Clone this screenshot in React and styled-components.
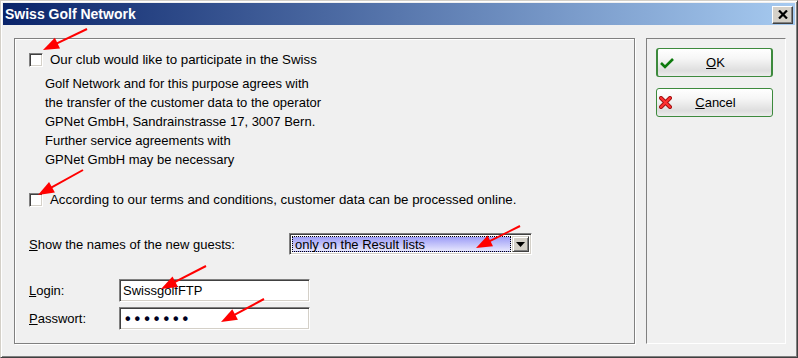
import styled, { createGlobalStyle } from "styled-components";

const GlobalStyle = createGlobalStyle`
  html, body { margin: 0; padding: 0; background: #f0f0f0; }
  body { font-family: "Liberation Sans", Arial, sans-serif; font-size: 13px; color: #000; }
`;

const arrows = [
  { from: [86, 28], to: [42, 49] },
  { from: [82, 169], to: [37, 194] },
  { from: [519, 225], to: [475, 247] },
  { from: [205, 265], to: [160, 288] },
  { from: [263, 298], to: [220, 321] },
];

const headPoints = ([x1, y1], [x2, y2]) => {
  const dx = x2 - x1;
  const dy = y2 - y1;
  const len = Math.hypot(dx, dy);
  const ux = dx / len;
  const uy = dy / len;
  const bx = x2 - ux * 16;
  const by = y2 - uy * 16;
  const w = 6;
  return `${x2},${y2} ${bx - uy * w},${by + ux * w} ${bx + uy * w},${by - ux * w}`;
};

const Arrows = () => (
  <Overlay width="798" height="358" viewBox="0 0 798 358">
    {arrows.map((a, i) => {
      const dx = a.to[0] - a.from[0];
      const dy = a.to[1] - a.from[1];
      const len = Math.hypot(dx, dy);
      const ex = a.to[0] - (dx / len) * 12;
      const ey = a.to[1] - (dy / len) * 12;
      return (
        <g key={i}>
          <line x1={a.from[0]} y1={a.from[1]} x2={ex} y2={ey} stroke="#ff0000" strokeWidth="2" />
          <polygon points={headPoints(a.from, a.to)} fill="#ff0000" />
        </g>
      );
    })}
  </Overlay>
);

const CheckIcon = () => (
  <svg width="14" height="12" viewBox="0 0 14 12">
    <path d="M1 6 L5 10 L13 2" fill="none" stroke="#0e7a0e" strokeWidth="2.6" />
  </svg>
);

const CrossIcon = () => (
  <svg width="13" height="13" viewBox="0 0 13 13">
    <path d="M2 2 L11 11 M11 2 L2 11" stroke="#a01010" strokeWidth="4" strokeLinecap="round" />
    <path d="M2 2 L11 11 M11 2 L2 11" stroke="#ff3030" strokeWidth="2.2" strokeLinecap="round" />
  </svg>
);

const App = () => {
  return (
    <>
      <GlobalStyle />
      <Window>
        <TitleBar>
          <Title>Swiss Golf Network</Title>
          <CloseButton>
            <svg width="10" height="9" viewBox="0 0 10 9">
              <path d="M1 0.5 L9 8.5 M9 0.5 L1 8.5" stroke="#000" strokeWidth="2.2" />
            </svg>
          </CloseButton>
        </TitleBar>
        <Body>
          <LeftGroup>
            <CheckRow>
              <CheckBox />
              <CheckLabel>Our club would like to participate in the Swiss</CheckLabel>
            </CheckRow>
            <Paragraph>
              <Line>Golf Network and for this purpose agrees with</Line>
              <Line>the transfer of the customer data to the operator</Line>
              <Line>GPNet GmbH, Sandrainstrasse 17, 3007 Bern.</Line>
              <Line>Further service agreements with</Line>
              <Line>GPNet GmbH may be necessary</Line>
            </Paragraph>
            <CheckRow $top={21}>
              <CheckBox />
              <CheckLabel>According to our terms and conditions, customer data can be processed online.</CheckLabel>
            </CheckRow>
            <FieldRow $top={24} $label={260} $height={22}>
              <span><u>S</u>how the names of the new guests:</span>
              <Select>
                <Selected>only on the Result lists</Selected>
                <DropButton>
                  <svg width="9" height="5" viewBox="0 0 9 5">
                    <path d="M0 0 H9 L4.5 5 Z" fill="#000" />
                  </svg>
                </DropButton>
              </Select>
            </FieldRow>
            <FieldRow $top={24} $label={90} $height={23}>
              <span><u>L</u>ogin:</span>
              <TextBox>SwissgolfFTP</TextBox>
            </FieldRow>
            <FieldRow $top={5} $label={90} $height={23}>
              <span><u>P</u>asswort:</span>
              <TextBox><Dots>•••••••</Dots></TextBox>
            </FieldRow>
          </LeftGroup>
          <RightGroup>
            <Button $default>
              <CheckIcon />
              <ButtonLabel><u>O</u>K</ButtonLabel>
            </Button>
            <Button>
              <CrossIcon />
              <ButtonLabel><u>C</u>ancel</ButtonLabel>
            </Button>
          </RightGroup>
        </Body>
        <Arrows />
      </Window>
    </>
  );
};

const Window = styled.div`
  position: relative;
  box-sizing: border-box;
  width: 798px;
  height: 358px;
  background: #f0f0f0;
  border: 1px solid;
  border-color: #d4d0c8 #404040 #404040 #d4d0c8;
  box-shadow: inset 1px 1px 0 #fff, inset -1px -1px 0 #808080;
  padding: 2px;
  display: flex;
  flex-direction: column;
`;

const TitleBar = styled.div`
  height: 22px;
  display: flex;
  align-items: center;
  justify-content: space-between;
  padding: 0 2px 0 2px;
  background: linear-gradient(to right, #0a246a, #a6caf0);
`;

const Title = styled.div`
  color: #fff;
  font-weight: bold;
  font-size: 14px;
`;

const CloseButton = styled.div`
  box-sizing: border-box;
  width: 21px;
  height: 18px;
  margin-top: 1px;
  background: #d4d0c8;
  border: 1px solid;
  border-color: #fff #404040 #404040 #fff;
  box-shadow: inset -1px -1px 0 #808080;
  display: flex;
  align-items: center;
  justify-content: center;
`;

const Body = styled.div`
  display: flex;
  gap: 11px;
  padding: 13px 0 0 11px;
`;

const LeftGroup = styled.div`
  box-sizing: border-box;
  width: 621px;
  height: 306px;
  border: 1px solid #808080;
  box-shadow: inset 1px 1px 0 #fff, 1px 1px 0 #fff;
  padding: 11px 0 0 14px;
  display: flex;
  flex-direction: column;
`;

const RightGroup = styled.div`
  box-sizing: border-box;
  width: 140px;
  height: 306px;
  border: 1px solid;
  border-color: #808080 #fff #fff #808080;
  padding: 9px 0 0 9px;
  display: flex;
  flex-direction: column;
  gap: 11px;
`;

const CheckRow = styled.div`
  display: flex;
  align-items: center;
  gap: 7px;
  height: 19px;
  margin-top: ${(p) => p.$top || 0}px;
  white-space: nowrap;
`;

const CheckBox = styled.div`
  box-sizing: border-box;
  width: 14px;
  height: 14px;
  background: #fff;
  border: 1px solid;
  border-color: #808080 #fff #fff #808080;
  box-shadow: inset 1px 1px 0 #404040, inset -1px -1px 0 #d4d0c8;
`;

const CheckLabel = styled.span`
  font-size: 13.3px;
`;

const Paragraph = styled.div`
  margin: 5px 0 0 16px;
`;

const Line = styled.div`
  height: 19px;
  line-height: 19px;
  white-space: nowrap;
`;

const FieldRow = styled.div`
  display: grid;
  grid-template-columns: ${(p) => p.$label}px auto;
  align-items: center;
  height: ${(p) => p.$height}px;
  margin-top: ${(p) => p.$top}px;
  white-space: nowrap;
`;

const Select = styled.div`
  box-sizing: border-box;
  width: 243px;
  height: 22px;
  border: 1px solid;
  border-color: #808080 #fff #fff #808080;
  box-shadow: inset 1px 1px 0 #404040, inset -1px -1px 0 #d4d0c8;
  background: #fff;
  padding: 2px;
  display: flex;
  gap: 1px;
`;

const Selected = styled.div`
  flex: 1;
  box-sizing: border-box;
  border: 1px dotted #000;
  background: linear-gradient(#9c9cf6, #e6e6fd);
  padding-left: 2px;
  line-height: 15px;
`;

const DropButton = styled.div`
  box-sizing: border-box;
  width: 17px;
  background: #d4d0c8;
  border: 1px solid;
  border-color: #d4d0c8 #404040 #404040 #d4d0c8;
  box-shadow: inset 1px 1px 0 #fff, inset -1px -1px 0 #808080;
  display: flex;
  align-items: center;
  justify-content: center;
`;

const TextBox = styled.div`
  box-sizing: border-box;
  width: 191px;
  height: 23px;
  background: #fff;
  border: 1px solid;
  border-color: #808080 #fff #fff #808080;
  box-shadow: inset 1px 1px 0 #404040, inset -1px -1px 0 #d4d0c8;
  padding: 0 0 0 3px;
  display: flex;
  align-items: center;
`;

const Dots = styled.span`
  font-size: 16px;
  font-weight: bold;
  letter-spacing: 4px;
  color: #000020;
  padding-left: 2px;
`;

const Button = styled.div`
  box-sizing: border-box;
  width: 117px;
  height: 29px;
  border: 1px solid #3d8a3d;
  border-left-width: ${(p) => (p.$default ? 2 : 1)}px;
  border-right-width: ${(p) => (p.$default ? 2 : 1)}px;
  border-radius: 3px;
  background: linear-gradient(#ffffff 0%, #f6f6f6 35%, #dedede 80%, #ececec 100%);
  display: grid;
  grid-template-columns: 16px 1fr 16px;
  align-items: center;
  padding-left: 2px;
`;

const ButtonLabel = styled.span`
  text-align: center;
  font-size: 13px;
`;

const Overlay = styled.svg`
  position: absolute;
  left: 0;
  top: 0;
  pointer-events: none;
`;

export default App;
